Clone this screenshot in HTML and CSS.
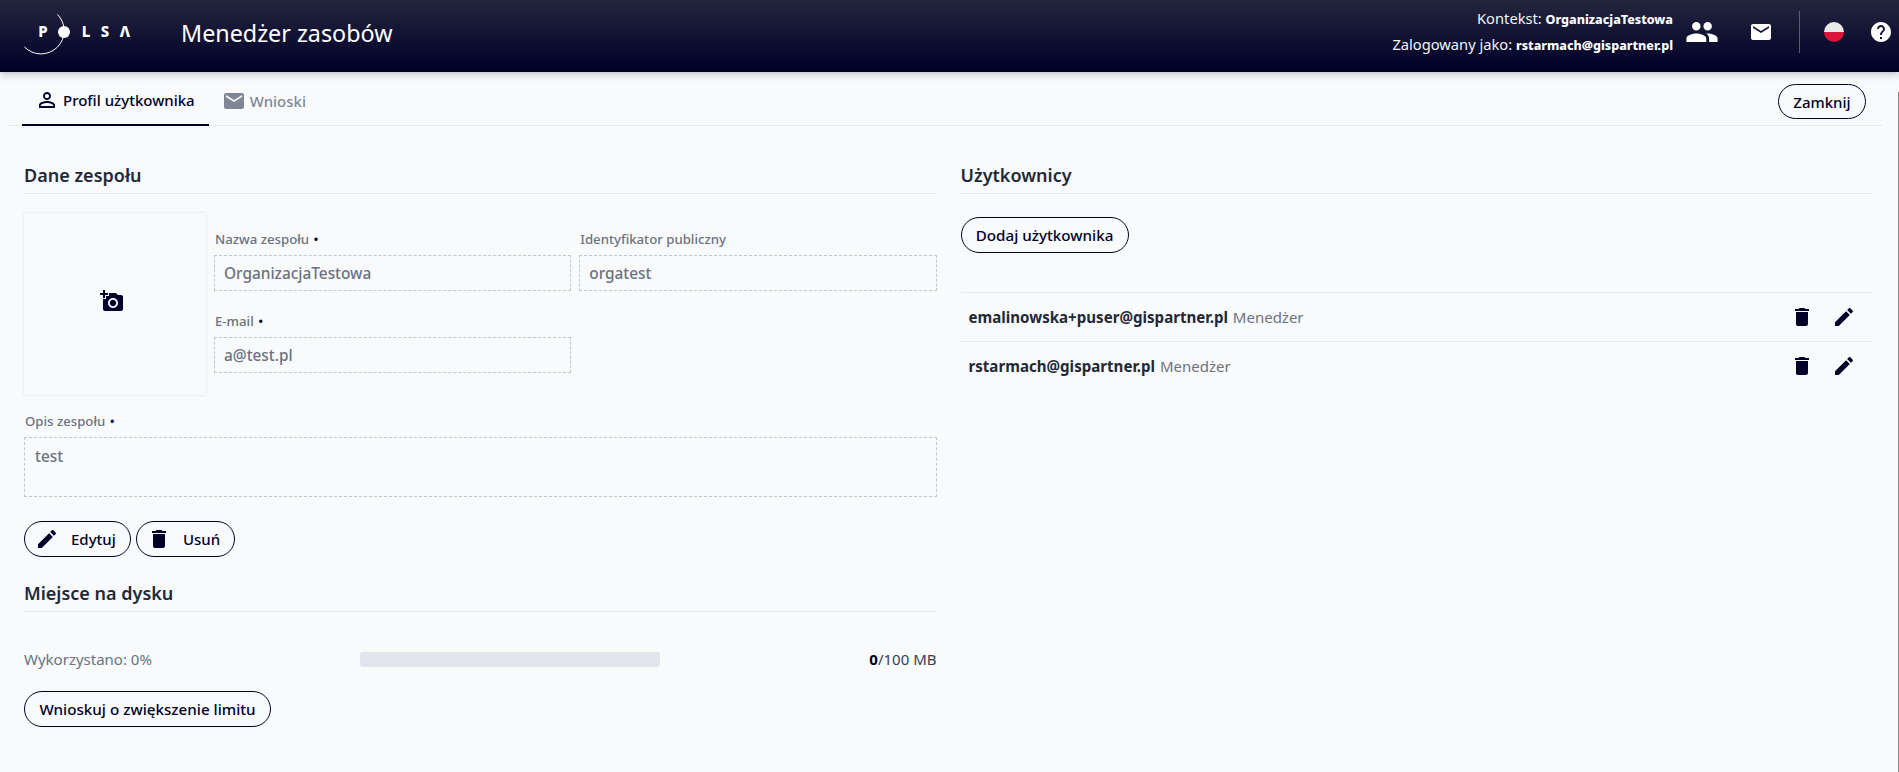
FILE: index.html
```html
<!DOCTYPE html>
<html lang="pl">
<head>
<meta charset="utf-8">
<title>Menedżer zasobów</title>
<link rel="stylesheet" href="styles.css">
</head>
<body>
<header class="topbar">
  <svg class="logo" width="140" height="64" viewBox="0 0 140 64">
    <path d="M57.5 14.5A21.5 21.5 0 0 1 24.5 47" fill="none" stroke="#fff" stroke-width="1"/>
    <circle cx="64" cy="32" r="6" fill="#fff"/>
    <text class="logo-letter" x="43" y="37">P</text>
    <text class="logo-letter" x="86" y="37">L</text>
    <text class="logo-letter" x="105" y="37">S</text>
    <text class="logo-letter" x="125" y="37">Λ</text>
  </svg>
  <h1 class="app-title">Menedżer zasobów</h1>
  <div class="session">
    <div>Kontekst: <b>OrganizacjaTestowa</b></div>
    <div>Zalogowany jako: <b>rstarmach@gispartner.pl</b></div>
  </div>
  <svg class="top-icon people" viewBox="0 0 24 24"><path d="M16 11c1.66 0 2.99-1.34 2.99-3S17.66 5 16 5c-1.66 0-3 1.34-3 3s1.34 3 3 3zm-8 0c1.66 0 2.99-1.34 2.99-3S9.66 5 8 5C6.34 5 5 6.34 5 8s1.34 3 3 3zm0 2c-2.33 0-7 1.17-7 3.5V19h14v-2.5c0-2.33-4.67-3.5-7-3.5zm8 0c-.29 0-.62.02-.97.05 1.16.84 1.97 1.97 1.97 3.45V19h6v-2.5c0-2.33-4.67-3.5-7-3.5z"/></svg>
  <svg class="top-icon mail" viewBox="0 0 24 24"><path d="M20 4H4c-1.1 0-1.99.9-1.99 2L2 18c0 1.1.9 2 2 2h16c1.1 0 2-.9 2-2V6c0-1.1-.9-2-2-2zm0 4l-8 5-8-5V6l8 5 8-5v2z"/></svg>
  <span class="divider"></span>
  <svg class="flag" viewBox="0 0 20 20"><defs><clipPath id="flag-clip"><circle cx="10" cy="10" r="10"/></clipPath></defs><g clip-path="url(#flag-clip)"><rect width="20" height="10" fill="#eaeaea"/><rect y="10" width="20" height="10" fill="#dc143c"/></g></svg>
  <svg class="top-icon help" viewBox="0 0 24 24"><path d="M12 2C6.48 2 2 6.48 2 12s4.48 10 10 10 10-4.48 10-10S17.52 2 12 2zm1 17h-2v-2h2v2zm2.07-7.75l-.9.92C13.45 12.9 13 13.5 13 15h-2v-.5c0-1.1.45-2.1 1.17-2.83l1.24-1.26c.37-.36.59-.86.59-1.41 0-1.1-.9-2-2-2s-2 .9-2 2H8c0-2.21 1.79-4 4-4s4 1.79 4 4c0 .88-.36 1.68-.93 2.25z"/></svg>
</header>

<nav class="tabs">
  <a class="tab active">
    <svg class="tab-icon" viewBox="0 0 24 24"><path d="M12 5.9c1.16 0 2.1.94 2.1 2.1s-.94 2.1-2.1 2.1S9.9 9.16 9.9 8s.94-2.1 2.1-2.1m0 9c2.97 0 6.1 1.46 6.1 2.1v1.1H5.9V17c0-.64 3.13-2.1 6.1-2.1M12 4C9.79 4 8 5.79 8 8s1.79 4 4 4 4-1.79 4-4-1.79-4-4-4zm0 9c-2.67 0-8 1.34-8 4v3h16v-3c0-2.66-5.33-4-8-4z"/></svg>
    Profil użytkownika
  </a>
  <a class="tab">
    <svg class="tab-icon" viewBox="0 0 24 24"><path d="M20 4H4c-1.1 0-1.99.9-1.99 2L2 18c0 1.1.9 2 2 2h16c1.1 0 2-.9 2-2V6c0-1.1-.9-2-2-2zm0 4l-8 5-8-5V6l8 5 8-5v2z"/></svg>
    Wnioski
  </a>
  <button class="btn close-btn">Zamknij</button>
</nav>

<main class="content">
  <section class="column">
    <h2 class="section-title">Dane zespołu</h2>
    <div class="team-head">
      <div class="avatar">
        <svg class="icon" viewBox="0 0 24 24"><path d="M3 4V1h2v3h3v2H5v3H3V6H0V4h3zm3 6V7h3V4h7l1.83 2H21c1.1 0 2 .9 2 2v12c0 1.1-.9 2-2 2H5c-1.1 0-2-.9-2-2V10h3zm7 9c2.76 0 5-2.24 5-5s-2.24-5-5-5-5 2.24-5 5 2.24 5 5 5zm-3.2-5c0 1.77 1.43 3.2 3.2 3.2s3.2-1.43 3.2-3.2-1.43-3.2-3.2-3.2-3.2 1.43-3.2 3.2z"/></svg>
      </div>
      <div class="fields">
        <div class="field">
          <label class="label">Nazwa zespołu <span class="req">•</span></label>
          <div class="input">OrganizacjaTestowa</div>
        </div>
        <div class="field">
          <label class="label">Identyfikator publiczny</label>
          <div class="input">orgatest</div>
        </div>
        <div class="field">
          <label class="label">E-mail <span class="req">•</span></label>
          <div class="input">a@test.pl</div>
        </div>
      </div>
    </div>
    <div class="field desc">
      <label class="label">Opis zespołu <span class="req">•</span></label>
      <div class="input textarea">test</div>
    </div>
    <div class="actions">
      <button class="btn btn-icon edit-btn">
        <svg class="icon" viewBox="0 0 24 24"><path d="M3 17.25V21h3.75L17.81 9.94l-3.75-3.75L3 17.25zM20.71 7.04c.39-.39.39-1.02 0-1.41l-2.34-2.34c-.39-.39-1.02-.39-1.41 0l-1.83 1.83 3.75 3.75 1.83-1.83z"/></svg>
        Edytuj
      </button>
      <button class="btn btn-icon del-btn">
        <svg class="icon" viewBox="0 0 24 24"><path d="M6 19c0 1.1.9 2 2 2h8c1.1 0 2-.9 2-2V7H6v12zM19 4h-3.5l-1-1h-5l-1 1H5v2h14V4z"/></svg>
        Usuń
      </button>
    </div>
    <h2 class="section-title disk-title">Miejsce na dysku</h2>
    <div class="usage">
      <span class="usage-label">Wykorzystano: 0%</span>
      <div class="bar"></div>
      <span class="usage-value"><b>0</b>/100 MB</span>
    </div>
    <button class="btn limit-btn">Wnioskuj o zwiększenie limitu</button>
  </section>

  <section class="column">
    <h2 class="section-title">Użytkownicy</h2>
    <button class="btn add-btn">Dodaj użytkownika</button>
    <ul class="users">
      <li class="user">
        <span class="user-text"><b>emalinowska+puser@gispartner.pl</b> <span class="role">Menedżer</span></span>
        <svg class="icon" viewBox="0 0 24 24"><path d="M6 19c0 1.1.9 2 2 2h8c1.1 0 2-.9 2-2V7H6v12zM19 4h-3.5l-1-1h-5l-1 1H5v2h14V4z"/></svg>
        <svg class="icon" viewBox="0 0 24 24"><path d="M3 17.25V21h3.75L17.81 9.94l-3.75-3.75L3 17.25zM20.71 7.04c.39-.39.39-1.02 0-1.41l-2.34-2.34c-.39-.39-1.02-.39-1.41 0l-1.83 1.83 3.75 3.75 1.83-1.83z"/></svg>
      </li>
      <li class="user">
        <span class="user-text"><b>rstarmach@gispartner.pl</b> <span class="role">Menedżer</span></span>
        <svg class="icon" viewBox="0 0 24 24"><path d="M6 19c0 1.1.9 2 2 2h8c1.1 0 2-.9 2-2V7H6v12zM19 4h-3.5l-1-1h-5l-1 1H5v2h14V4z"/></svg>
        <svg class="icon" viewBox="0 0 24 24"><path d="M3 17.25V21h3.75L17.81 9.94l-3.75-3.75L3 17.25zM20.71 7.04c.39-.39.39-1.02 0-1.41l-2.34-2.34c-.39-.39-1.02-.39-1.41 0l-1.83 1.83 3.75 3.75 1.83-1.83z"/></svg>
      </li>
    </ul>
  </section>
</main>
</body>
</html>
```

FILE: styles.css
```css
* { box-sizing: border-box; }
html, body { height: 100%; }
body {
  margin: 0;
  background: #f9fafb;
  font-family: "Noto Sans", "Open Sans", sans-serif;
  color: #000028;
  overflow: hidden;
}
/* thin scrollbar track edge lying over the page's right side */
body::after {
  content: "";
  position: fixed;
  top: 92px;
  right: 0;
  bottom: 0;
  width: 1px;
  background: #8a8a8a;
}
.topbar {
  height: 72px;
  padding-bottom: 8px;
  display: flex;
  align-items: center;
  color: #fff;
  background: linear-gradient(#24253d, #000028);
  box-shadow: 0 2px 8px rgba(0, 0, 40, .25);
  position: relative;
}
.logo { flex: none; margin-right: 41px; }
.logo-letter { fill: #fff; font: 800 15px "Noto Sans", sans-serif; text-anchor: middle; }
.app-title { margin: 2px 0 0; font-size: 23.3px; font-weight: 400; color: #fff; flex: 1; }
.session { font-size: 14.7px; line-height: 24px; text-align: right; color: #f3f4f6; }
.session b { font-size: 12.5px; font-weight: 800; color: #fff; }
.top-icon { fill: #fff; flex: none; }
.people { width: 34px; height: 34px; margin-left: 12px; }
.mail { width: 24px; height: 24px; margin-left: 30px; }
.divider { width: 1px; height: 42px; background: #5a5b70; margin-left: 26px; }
.flag { width: 20px; height: 20px; margin-left: 24px; }
.help { width: 24px; height: 24px; margin-left: 25px; margin-right: 6px; }

.tabs {
  height: 54px;
  margin: 0 17px 0 8px;
  padding-left: 14px;
  display: flex;
  align-items: stretch;
  border-bottom: 1px solid #e5e7eb;
}
.tab {
  display: flex;
  align-items: center;
  gap: 4px;
  padding: 3px 14px 0 13px;
  font-size: 15px;
  font-weight: 500;
  color: #7f8794;
  height: 54px;
}
.tab.active { color: #000028; border-bottom: 2px solid #000028; }
.tab-icon { width: 24px; height: 24px; fill: #7f8794; }
.tab.active .tab-icon { fill: #000028; }
.btn {
  font-family: inherit;
  font-size: 15px;
  font-weight: 500;
  color: #000028;
  background: #f9fafb;
  border: 1px solid #000028;
  border-radius: 18px;
  height: 36px;
  padding: 0 14px;
  cursor: pointer;
}
.close-btn { width: 88px; padding: 0; margin: 12px 16px 0 auto; height: 35px; }

.content {
  display: grid;
  grid-template-columns: 1fr 1fr;
  column-gap: 24px;
  padding: 38px 26px 0 24px;
}
.column { min-width: 0; }
.section-title {
  margin: 0;
  height: 30px;
  font-size: 18px;
  line-height: 22px;
  font-weight: 600;
  color: #1f2937;
  border-bottom: 1px solid #e5e7eb;
}
.team-head { display: flex; gap: 8px; margin-top: 19px; }
.avatar {
  width: 182px;
  height: 182px;
  padding: 0 7px 7px 0;
  flex: none;
  display: flex;
  align-items: center;
  justify-content: center;
  box-shadow: 0 0 2px rgba(0, 0, 40, .12);
}
.icon { width: 24px; height: 24px; fill: #000028; flex: none; }
.fields {
  flex: 1;
  display: grid;
  grid-template-columns: 1fr 1fr;
  gap: 20px 8px;
  padding-top: 16px;
  align-content: start;
}
.label {
  display: block;
  height: 20px;
  margin-bottom: 6px;
  padding-left: 1px;
  font-size: 13.2px;
  line-height: 20px;
  font-weight: 500;
  color: #6b7280;
}
.req { color: #000028; margin-left: 1px; }
.input {
  height: 36px;
  padding: 0 9px;
  border: 1px dashed #c3c6d0;
  font-size: 15.4px;
  line-height: 36px;
  font-weight: 500;
  color: #6b7280;
}
.desc { margin-top: 16px; }
.textarea { height: 60px; padding: 4px 10px; line-height: 30px; }
.actions { display: flex; gap: 5px; margin-top: 24px; }
.btn-icon { display: flex; align-items: center; }
.edit-btn { width: 107px; padding: 0 0 0 10px; gap: 12px; }
.del-btn { width: 99px; padding: 0 0 0 10px; gap: 12px; }
.disk-title { margin-top: 25px; }
.usage { display: flex; align-items: center; height: 16px; margin-top: 39px; font-size: 15px; color: #6b7280; }
.usage-label { width: 336px; flex: none; }
.bar { width: 300px; height: 15px; flex: none; background: #e3e5ec; border-radius: 3px; }
.usage-value { margin-left: auto; color: #374151; }
.usage-value b { color: #000028; }
.limit-btn { display: block; width: 247px; padding: 0; margin-top: 24px; font-size: 15.2px; }
.add-btn { display: block; width: 168px; padding: 0; margin-top: 23px; font-size: 15.2px; }
.users { list-style: none; margin: 39px 0 0; padding: 0; }
.user {
  display: flex;
  align-items: center;
  gap: 18px;
  height: 49px;
  padding: 0 17px 0 8px;
  border-top: 1px solid #e5e7eb;
  font-size: 15px;
}
.user-text { flex: 1; color: #1f2937; }
.user-text b { font-size: 15.1px; font-weight: 700; }
.role { color: #6b7280; margin-left: 1px; }
```
